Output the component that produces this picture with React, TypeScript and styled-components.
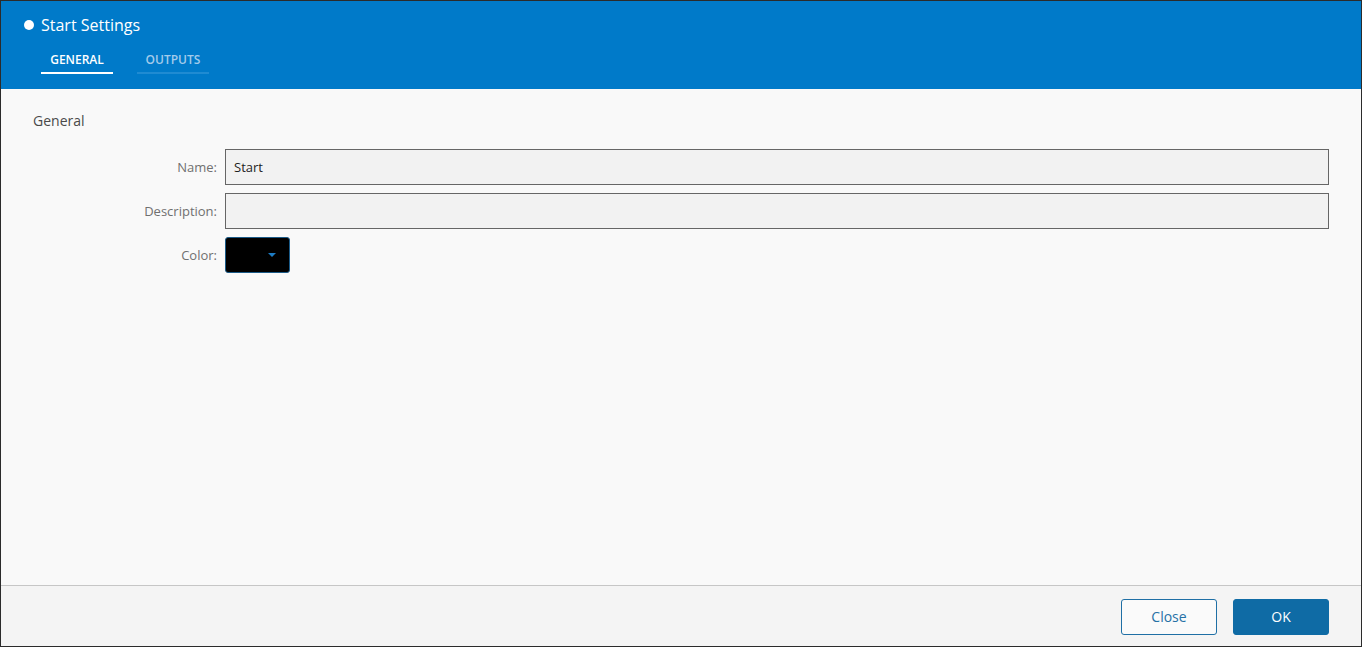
import React from "react";
import styled, { createGlobalStyle } from "styled-components";

const Global = createGlobalStyle`
  html, body { margin: 0; padding: 0; background: #2b2b2b; }
  body { font-family: "Open Sans", "Noto Sans", sans-serif; }
  * { box-sizing: border-box; }
`;

const Dialog = styled.div`
  margin: 1px 1px 0 1px;
  width: 1360px;
  height: 645px;
  display: flex;
  flex-direction: column;
  background: #f9f9f9;
`;

const Header = styled.header`
  background: #007ac9;
  padding: 13px 0 15px 23px;
  display: flex;
  flex-direction: column;
  gap: 15px;
`;

const TitleRow = styled.div`
  display: flex;
  align-items: center;
  gap: 7px;
  height: 22px;
  color: #ffffff;
  font-size: 16px;
`;

const Dot = styled.span`
  width: 10px;
  height: 10px;
  border-radius: 50%;
  background: #ffffff;
`;

const Tabs = styled.nav`
  display: flex;
  gap: 24px;
  margin-left: 17px;
`;

const Tab = styled.div<{ $active?: boolean }>`
  width: 72px;
  text-align: center;
  font-size: 12px;
  font-weight: 600;
  line-height: 16px;
  padding: 1px 0 4px 0;
  color: ${(p) => (p.$active ? "#ffffff" : "#a3cbeb")};
  border-bottom: 2px solid ${(p) => (p.$active ? "#ffffff" : "#1f8bd2")};
`;

const Body = styled.main`
  flex: 1;
  padding: 22px 32px 0 32px;
`;

const SectionTitle = styled.h2`
  margin: 0 0 18px 0;
  font-size: 14px;
  font-weight: 400;
  line-height: 20px;
  color: #4a4a4a;
`;

const Form = styled.div`
  display: grid;
  grid-template-columns: 184px 1fr;
  column-gap: 8px;
  row-gap: 8px;
  align-items: center;
`;

const Label = styled.label`
  text-align: right;
  font-size: 13px;
  color: #707070;
`;

const Input = styled.div`
  height: 36px;
  border: 1px solid #666666;
  background: #f2f2f2;
  padding: 0 8px;
  display: flex;
  align-items: center;
  font-size: 13px;
  color: #1e1e1e;
`;

const ColorPicker = styled.div`
  width: 65px;
  height: 36px;
  background: #000000;
  border: 1px solid #1b5b88;
  border-radius: 3px;
  display: flex;
  align-items: center;
  justify-content: flex-end;
  padding-right: 13px;
`;

const Caret = styled.span`
  width: 0;
  height: 0;
  border-left: 4px solid transparent;
  border-right: 4px solid transparent;
  border-top: 4px solid #1d7cc4;
`;

const Footer = styled.footer`
  height: 61px;
  border-top: 1px solid #c6c6c6;
  background: #f4f4f4;
  display: flex;
  justify-content: flex-end;
  align-items: flex-start;
  gap: 16px;
  padding: 13px 32px 0 0;
`;

const Button = styled.button<{ $primary?: boolean }>`
  width: 96px;
  height: 36px;
  border-radius: 3px;
  padding: 0 0 1px 0;
  font-family: "Open Sans", "Noto Sans", sans-serif;
  font-size: 14px;
  line-height: 18px;
  cursor: pointer;
  border: 1px solid ${(p) => (p.$primary ? "#0f6ba5" : "#1f6fa5")};
  background: ${(p) => (p.$primary ? "#0f6ba5" : "#fafafa")};
  color: ${(p) => (p.$primary ? "#ffffff" : "#2671a6")};
`;

export default function App() {
  return (
    <>
      <Global />
      <Dialog>
        <Header>
          <TitleRow>
            <Dot />
            <span>Start Settings</span>
          </TitleRow>
          <Tabs>
            <Tab $active>GENERAL</Tab>
            <Tab>OUTPUTS</Tab>
          </Tabs>
        </Header>
        <Body>
          <SectionTitle>General</SectionTitle>
          <Form>
            <Label>Name:</Label>
            <Input>Start</Input>
            <Label>Description:</Label>
            <Input />
            <Label>Color:</Label>
            <ColorPicker>
              <Caret />
            </ColorPicker>
          </Form>
        </Body>
        <Footer>
          <Button>Close</Button>
          <Button $primary>OK</Button>
        </Footer>
      </Dialog>
    </>
  );
}
